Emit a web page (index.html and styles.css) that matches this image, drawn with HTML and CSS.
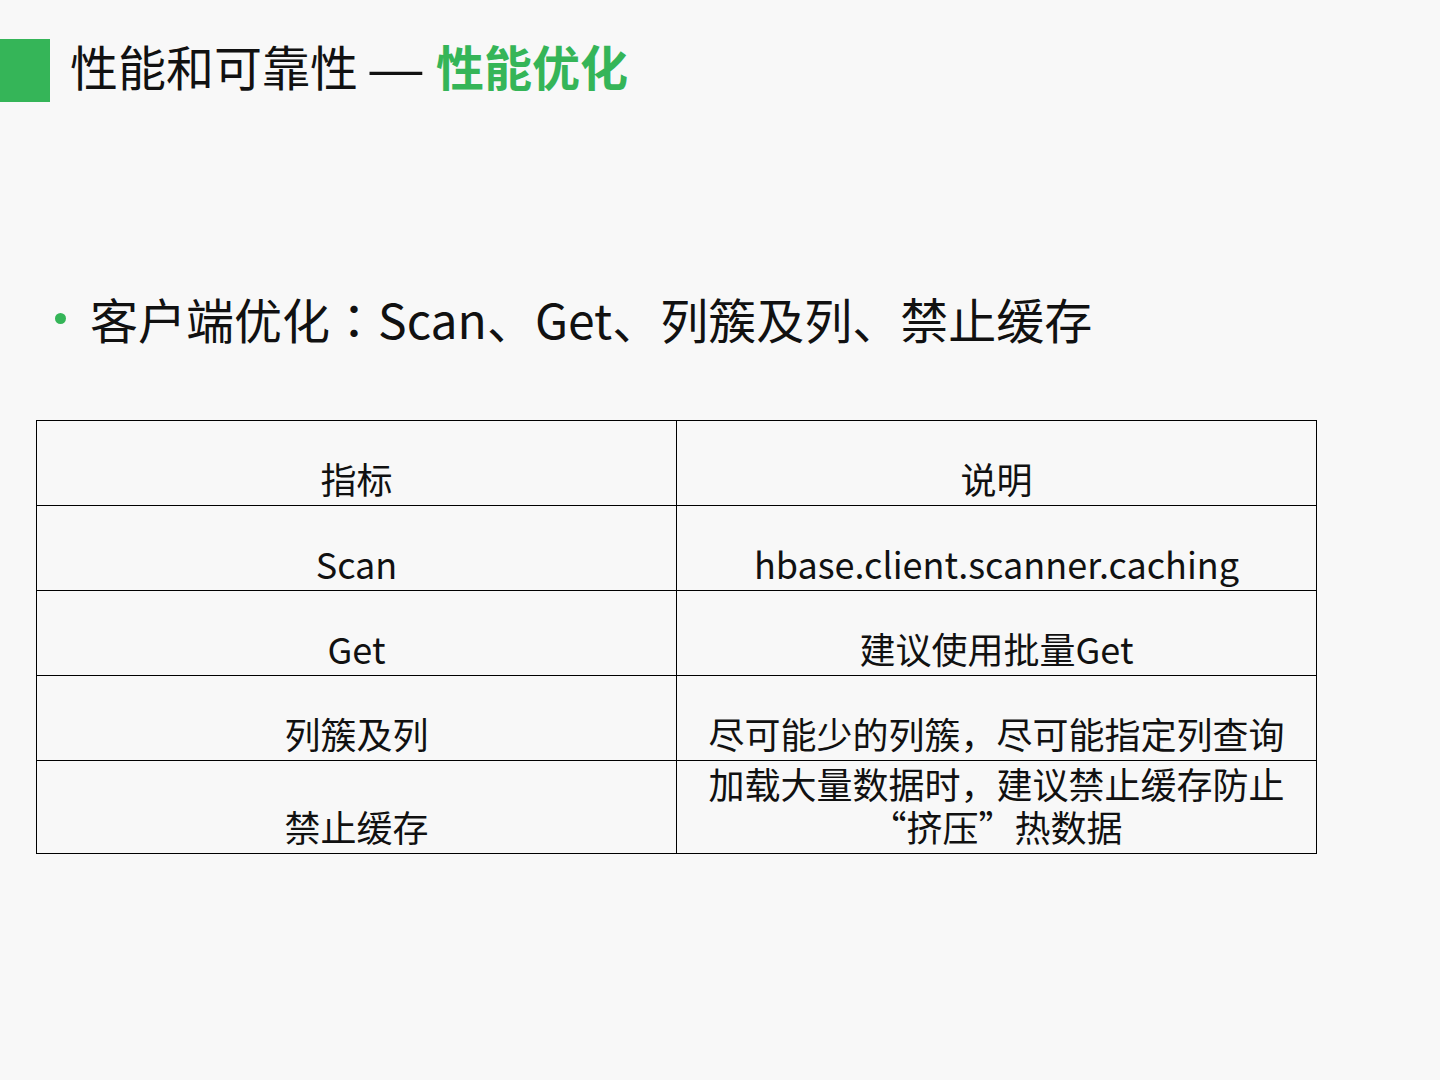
FILE: index.html
```html
<!DOCTYPE html>
<html lang="zh-CN">
<head>
<meta charset="utf-8">
<title>性能和可靠性 — 性能优化</title>
<link rel="stylesheet" href="styles.css">
</head>
<body>
<div class="slide">
  <header class="head">
    <div class="bar"></div>
    <h1 class="title">性能和可靠性<span class="dash">—</span><span class="accent">性能优化</span></h1>
  </header>
  <ul class="points">
    <li><span class="dot"></span>客户端优化<span class="punct">：</span>Scan、Get、列簇及列、禁止缓存</li>
  </ul>
  <table class="grid">
    <tr><td>指标</td><td>说明</td></tr>
    <tr><td>Scan</td><td>hbase.client.scanner.caching</td></tr>
    <tr><td>Get</td><td>建议使用批量Get</td></tr>
    <tr><td>列簇及列</td><td>尽可能少的列簇<span class="punct">，</span>尽可能指定列查询</td></tr>
    <tr class="tall"><td>禁止缓存</td><td>加载大量数据时<span class="punct">，</span>建议禁止缓存防止<br>“挤压”热数据</td></tr>
  </table>
</div>
</body>
</html>
```
FILE: styles.css
```css
html, body {
  margin: 0;
  padding: 0;
  background: #f8f8f8;
}
.slide {
  width: 1440px;
  height: 1080px;
  font-family: "Noto Sans CJK SC", "Noto Sans", sans-serif;
  color: #111;
  padding-top: 39px;
  box-sizing: border-box;
}
.head {
  display: flex;
  align-items: center;
  gap: 20px;
}
.bar {
  width: 50px;
  height: 63px;
  background: #35b558;
}
.title {
  margin: 0 0 6px;
  font-size: 48px;
  font-weight: 400;
  line-height: 1;
}
.dash {
  display: inline-block;
  margin: 0 16px 0 14px;
  font-family: "Liberation Sans", sans-serif;
  font-size: 48px;
  transform: scaleX(1.1);
}
.accent {
  color: #35b558;
  font-weight: 700;
}
.punct {
  font-family: "Noto Sans CJK TC", "Noto Sans CJK SC", sans-serif;
}
.points {
  list-style: none;
  margin: 184px 0 0;
  padding: 0 0 0 55px;
}
.points li {
  display: flex;
  align-items: center;
  font-size: 48px;
  line-height: 64px;
}
.dot {
  width: 11px;
  height: 11px;
  border-radius: 50%;
  background: #35b558;
  margin-right: 24px;
}
.grid {
  margin: 70px 0 0 36px;
  border-collapse: collapse;
  width: 1281px;
  table-layout: fixed;
}
.grid td {
  border: 1px solid #000;
  height: 79px;
  padding: 0 0 5px;
  text-align: center;
  vertical-align: bottom;
  font-size: 36px;
  line-height: 43px;
}
.grid tr.tall td {
  height: 87px;
}
```
